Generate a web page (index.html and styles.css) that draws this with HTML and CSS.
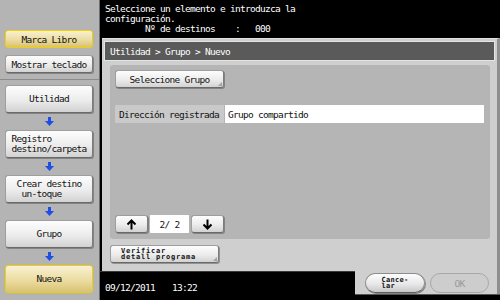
FILE: index.html
```html
<!DOCTYPE html>
<html lang="es">
<head>
<meta charset="utf-8">
<title>Nuevo grupo</title>
<link rel="stylesheet" href="styles.css">
</head>
<body>
<div class="screen">
  <aside class="sidebar">
    <div class="side-top">
      <div class="btn yellow side-btn">Marca Libro</div>
      <div class="btn side-btn">Mostrar teclado</div>
    </div>
    <div class="chain">
      <div class="btn chain-btn"><span>Utilidad</span></div>
      <div class="down"><svg width="9" height="9" viewBox="0 0 9 9"><rect x="3" y="0" width="3" height="4.5" fill="#1d4fe6"/><polygon points="0,4 9,4 4.5,9" fill="#1d4fe6"/></svg></div>
      <div class="btn chain-btn"><span>Registro
destino/carpeta</span></div>
      <div class="down"><svg width="9" height="9" viewBox="0 0 9 9"><rect x="3" y="0" width="3" height="4.5" fill="#1d4fe6"/><polygon points="0,4 9,4 4.5,9" fill="#1d4fe6"/></svg></div>
      <div class="btn chain-btn"><span>Crear destino
 un-toque</span></div>
      <div class="down"><svg width="9" height="9" viewBox="0 0 9 9"><rect x="3" y="0" width="3" height="4.5" fill="#1d4fe6"/><polygon points="0,4 9,4 4.5,9" fill="#1d4fe6"/></svg></div>
      <div class="btn chain-btn"><span>Grupo</span></div>
      <div class="down"><svg width="9" height="9" viewBox="0 0 9 9"><rect x="3" y="0" width="3" height="4.5" fill="#1d4fe6"/><polygon points="0,4 9,4 4.5,9" fill="#1d4fe6"/></svg></div>
      <div class="btn yellow chain-btn"><span>Nueva</span></div>
    </div>
  </aside>
  <main class="main">
    <div class="msg">Seleccione un elemento e introduzca la
configuración.
        Nº de destinos    :   000</div>
    <section class="window">
      <div class="crumb">Utilidad &gt; Grupo &gt; Nuevo</div>
      <div class="panel">
        <div class="btn sub select-btn">Seleccione Grupo</div>
        <div class="field">
          <div class="field-label">Dirección registrada</div>
          <div class="field-value">Grupo compartido</div>
        </div>
        <div class="pager">
          <div class="btn pg-btn"><svg width="11" height="11" viewBox="0 0 11 11"><path d="M5.5 10.5V1.5M1.5 5.5L5.5 1.5L9.5 5.5" fill="none" stroke="#000" stroke-width="2"/></svg></div>
          <div class="pg-num">2/ 2</div>
          <div class="btn pg-btn"><svg width="11" height="11" viewBox="0 0 11 11"><path d="M5.5 0.5V9.5M1.5 5.5L5.5 9.5L9.5 5.5" fill="none" stroke="#000" stroke-width="2"/></svg></div>
        </div>
      </div>
      <div class="btn sub verify-btn"><span>Verificar
detall programa</span></div>
    </section>
    <div class="bottom">
      <div class="status"><span>09/12/2011</span><span>13:22</span></div>
      <div class="actions">
        <div class="pill"><span>Cance-
lar</span></div>
        <div class="pill disabled">OK</div>
      </div>
    </div>
  </main>
</div>
</body>
</html>
```
FILE: styles.css
```css
* {
  box-sizing: border-box;
  margin: 0;
  padding: 0;
}

body {
  width: 500px;
  height: 300px;
  overflow: hidden;
  background: #000;
  font-family: "DejaVu Sans Mono", "Liberation Mono", monospace;
  font-size: 9.5px;
  letter-spacing: -0.72px;
  color: #111;
}

.screen {
  display: grid;
  grid-template-columns: 100px 400px;
  height: 300px;
}

/* ---------- sidebar ---------- */
.sidebar {
  background: #b4b4b4;
  border-right: 1px solid #6e6e6e;
  display: flex;
  flex-direction: column;
}

.side-top {
  height: 80px;
  padding: 30px 0 0 5px;
  display: flex;
  flex-direction: column;
  gap: 7px;
  border-bottom: 1px solid #8c8c8c;
}

.btn {
  background: linear-gradient(#fdfdfd, #ececec 55%, #d2d2d2);
  border: 1px solid #9e9e9e;
  border-right-color: #7c7c7c;
  border-bottom-color: #6a6a6a;
  border-radius: 3px;
  box-shadow: 1px 1px 0 rgba(70, 70, 70, 0.45);
  display: flex;
  align-items: center;
  justify-content: center;
  position: relative;
}

.yellow {
  background: linear-gradient(#f8f0d2, #ecdca0 55%, #d8c272);
  border: 1.5px solid #f0d000;
  box-shadow: none;
}

.side-btn {
  width: 88px;
  height: 18px;
}

.chain {
  padding: 5px 0 0 5px;
  display: flex;
  flex-direction: column;
}

.chain-btn {
  width: 88px;
  height: 28px;
}

.chain-btn span {
  white-space: pre;
  text-align: left;
  line-height: 10px;
}

.down {
  height: 17px;
  width: 88px;
  display: flex;
  align-items: center;
  justify-content: center;
}

.down svg {
  display: block;
}

/* ---------- main ---------- */
.main {
  display: flex;
  flex-direction: column;
}

.msg {
  height: 38px;
  padding: 4px 0 0 5px;
  color: #fff;
  line-height: 10px;
  white-space: pre;
}

.window {
  margin-left: 2px;
  width: 398px;
  height: 233px;
  background: #cfcfcf;
  border-top: 1px solid #e2e2e2;
  border-right: 3px solid #8e8e8e;
  padding: 2px 2px 0 2px;
  display: flex;
  flex-direction: column;
}

.crumb {
  height: 20px;
  background: #5a5a5a;
  border: 1px solid #e4e4e4;
  color: #fff;
  padding-left: 5px;
  display: flex;
  align-items: center;
}

.panel {
  margin: 4px 5px 0 6px;
  height: 174px;
  background: #b5b5b5;
  border-radius: 3px;
  padding: 5px 6px 6px 5px;
  display: flex;
  flex-direction: column;
}

.sub::after {
  content: "";
  position: absolute;
  right: 1px;
  bottom: 1px;
  border-left: 4px solid transparent;
  border-bottom: 4px solid #a3a3a3;
}

.select-btn {
  width: 109px;
  height: 18px;
}

.field {
  margin-top: 17px;
  height: 18px;
  display: flex;
  gap: 1px;
}

.field-label {
  width: 109px;
  background: #c9c9c9;
  display: flex;
  align-items: center;
  padding-left: 4px;
}

.field-value {
  flex: 1;
  background: #fff;
  display: flex;
  align-items: center;
  padding-left: 3px;
}

.pager {
  margin-top: auto;
  display: flex;
  gap: 2px;
  height: 18px;
}

.pg-btn {
  width: 33px;
  height: 18px;
}

.pg-btn svg {
  display: block;
}

.pg-num {
  width: 39px;
  background: #fff;
  display: flex;
  align-items: center;
  justify-content: center;
}

.verify-btn {
  margin: 6px 0 0 6px;
  width: 109px;
  height: 18px;
}

.verify-btn span {
  white-space: pre;
  font-size: 7px;
  letter-spacing: 0.8px;
  line-height: 6px;
  font-weight: bold;
  margin-left: -12px;
}

/* ---------- bottom ---------- */
.bottom {
  display: flex;
  height: 29px;
}

.status {
  width: 255px;
  border-top: 1px solid #3a3a3a;
  color: #fff;
  display: flex;
  align-items: center;
  gap: 17px;
  padding: 2px 0 0 5px;
}

.actions {
  width: 145px;
  height: 23px;
  background: #cfcfcf;
  border-right: 3px solid #8e8e8e;
  display: flex;
  gap: 5px;
  padding: 2px 0 0 10px;
  box-shadow: 0 1px 0 #555;
}

.pill {
  width: 60px;
  height: 20px;
  border-radius: 10px;
  background: linear-gradient(#fdfdfd, #e8e8e8 55%, #c8c8c8);
  border: 1px solid #8c8c8c;
  border-bottom-color: #5e5e5e;
  box-shadow: 1px 1px 0 rgba(60, 60, 60, 0.5);
  display: flex;
  align-items: center;
  justify-content: center;
}

.pill span {
  white-space: pre;
  font-size: 7px;
  letter-spacing: 0.3px;
  line-height: 6px;
  font-weight: bold;
}

.pill.disabled {
  width: 59px;
  background: #cdcdcd;
  border: 1px solid #a8a8a8;
  box-shadow: none;
  color: #9a9a9a;
}
```
